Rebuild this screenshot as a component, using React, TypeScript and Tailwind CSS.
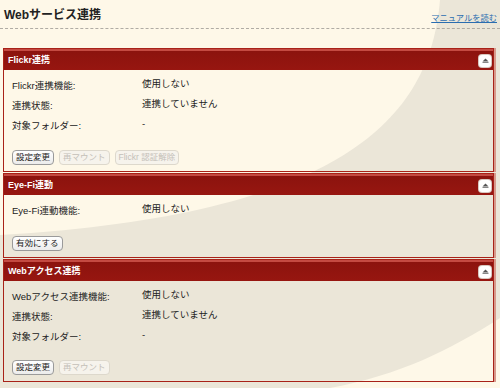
const font = "font-['Liberation_Sans','Noto_Sans_CJK_JP',sans-serif]";

type Row = { label: string; value: string };
type Btn = { text: string; disabled?: boolean };

function CollapseButton() {
  return (
    <div className="flex h-[12px] w-[12px] items-center justify-center rounded-[3px] bg-white shadow-[0_0_0_1px_#d8c8c0]">
      <svg width="7" height="5" viewBox="0 0 7 5">
        <path d="M3.5 0.5 L6.5 3.5 L0.5 3.5 Z" fill="#555" />
        <rect x="0.5" y="4" width="6" height="1" fill="#888" />
      </svg>
    </div>
  );
}

function Panel({
  title,
  rows,
  buttons,
  gap,
}: {
  title: string;
  rows: Row[];
  buttons: Btn[];
  gap: string;
}) {
  return (
    <section className="mx-[3px] mr-[6px] border border-[#a82218] shadow-[2px_0_0_#d79a8c]">
      {/* header */}
      <div className="flex h-[21px] items-center justify-between border-t-2 border-[#c44a42] bg-gradient-to-b from-[#8c130e] to-[#971610] pl-[4px] pr-[2px]">
        <span className="text-[9px] font-bold text-white">{title}</span>
        <CollapseButton />
      </div>
      {/* body */}
      <div className="px-[8px] pt-[5px] pb-[6px]">
        {rows.map((r) => (
          <div key={r.label} className="flex h-[20px] items-center text-[9.5px] text-[#222]">
            <span className="w-[130px] pt-[2px]">{r.label}</span>
            <span className="-mt-[2px]">{r.value}</span>
          </div>
        ))}
        <div className={`flex gap-[5px] ${gap}`}>
          {buttons.map((b) => (
            <button
              key={b.text}
              className={`h-[15px] rounded-[4px] border px-[3px] text-[8.5px] leading-none ${
                b.disabled
                  ? "border-[#ddd8cc] bg-[#f6f3ec] text-[#c4c0b8]"
                  : "border-[#9a9a9a] bg-gradient-to-b from-white to-[#ececec] text-[#222]"
              }`}
            >
              {b.text}
            </button>
          ))}
        </div>
      </div>
    </section>
  );
}

export default function App() {
  return (
    <div className={`relative h-[388px] w-[500px] overflow-hidden bg-[#ebe6d8] ${font}`}>
      {/* background swirl */}
      <svg className="absolute inset-0" width="500" height="388" viewBox="0 0 500 388">
        <path d="M0 0 L440 0 C430 120 340 215 0 235 Z" fill="#fef8e8" />
        <path d="M500 318 C450 350 400 375 330 388 L500 388 Z" fill="#fef8e8" />
      </svg>

      <div className="relative flex flex-col">
        {/* title */}
        <div className="flex h-[29px] items-end justify-between border-b border-dashed border-[#b0aca4] pl-[4px] pr-[3px] pb-[3px]">
          <h1 className="mb-[1px] text-[12px] font-bold text-[#222]">Webサービス連携</h1>
          <a href="#" className="text-[8.25px] text-[#2a6db0] underline">
            マニュアルを読む
          </a>
        </div>

        <div className="mt-[19px] flex flex-col gap-[1px]">
          <Panel
            title="Flickr連携"
            rows={[
              { label: "Flickr連携機能:", value: "使用しない" },
              { label: "連携状態:", value: "連携していません" },
              { label: "対象フォルダー:", value: "-" },
            ]}
            buttons={[
              { text: "設定変更" },
              { text: "再マウント", disabled: true },
              { text: "Flickr 認証解除", disabled: true },
            ]}
            gap="mt-[15px]"
          />
          <Panel
            title="Eye-Fi連動"
            rows={[{ label: "Eye-Fi連動機能:", value: "使用しない" }]}
            buttons={[{ text: "有効にする" }]}
            gap="mt-[16px]"
          />
          <Panel
            title="Webアクセス連携"
            rows={[
              { label: "Webアクセス連携機能:", value: "使用しない" },
              { label: "連携状態:", value: "連携していません" },
              { label: "対象フォルダー:", value: "-" },
            ]}
            buttons={[{ text: "設定変更" }, { text: "再マウント", disabled: true }]}
            gap="mt-[14px]"
          />
        </div>
      </div>
    </div>
  );
}
